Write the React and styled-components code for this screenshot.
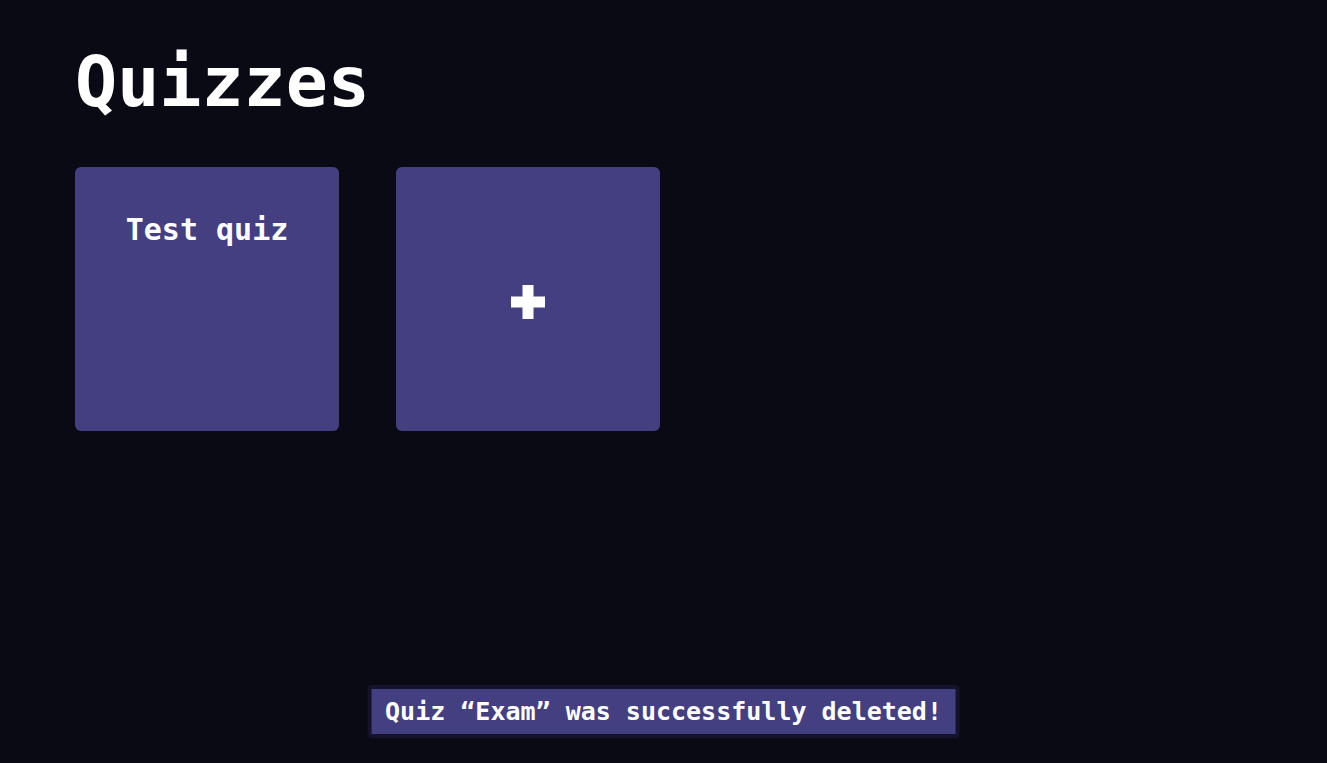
import React from 'react';
import styled, { createGlobalStyle } from 'styled-components';

const GlobalStyle = createGlobalStyle`
  html, body {
    margin: 0;
    padding: 0;
    background: #0a0a14;
    color: #ffffff;
    font-family: 'DejaVu Sans Mono', 'Liberation Mono', monospace;
  }
`;

const Page = styled.main`
  min-height: 100vh;
  padding: 30px 75px;
  box-sizing: border-box;
`;

const Title = styled.h1`
  font-size: 70px;
  font-weight: 600;
  line-height: 1;
  margin: 0 0 50px 0;
  padding-top: 17px;
  letter-spacing: 0;
`;

const Grid = styled.div`
  display: flex;
  gap: 57px;
`;

const Card = styled.div`
  width: 264px;
  height: 264px;
  background: #433f80;
  border-radius: 6px;
  display: flex;
  flex-direction: column;
  align-items: center;
  justify-content: ${p => (p.$center ? 'center' : 'flex-start')};
  cursor: pointer;
  box-sizing: border-box;
  padding-top: ${p => (p.$center ? '0' : '45px')};
`;

const CardTitle = styled.span`
  font-size: 30px;
  font-weight: 600;
`;

const Plus = styled.svg`
  width: 34px;
  height: 34px;
  margin-top: 5px;
`;

const Toast = styled.div`
  position: fixed;
  left: 50%;
  bottom: 25px;
  transform: translateX(-50%);
  background: #433f80;
  border: 4px solid #14132b;
  border-radius: 4px;
  padding: 8px 14px;
  font-size: 25px;
  font-weight: 600;
  white-space: nowrap;
`;

export default function App() {
  return (
    <>
      <GlobalStyle />
      <Page>
        <Title>Quizzes</Title>
        <Grid>
          <Card>
            <CardTitle>Test quiz</CardTitle>
          </Card>
          <Card $center>
            <Plus viewBox="0 0 34 34">
              <rect x="0" y="11.5" width="34" height="11" fill="#fff" />
              <rect x="11.5" y="0" width="11" height="34" fill="#fff" />
            </Plus>
          </Card>
        </Grid>
      </Page>
      <Toast>Quiz “Exam” was successfully deleted!</Toast>
    </>
  );
}
